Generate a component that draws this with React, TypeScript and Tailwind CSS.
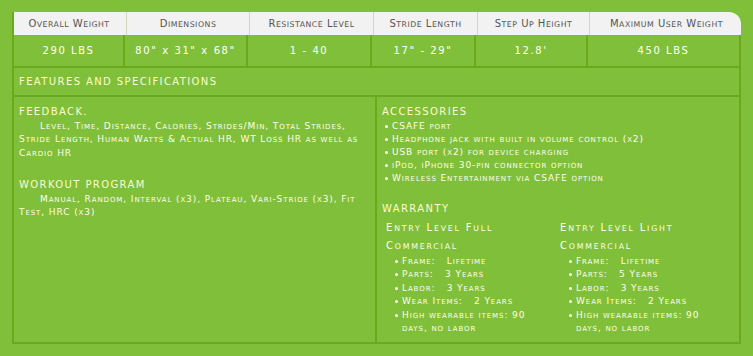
const specs = [
  { label: "Overall Weight", value: "290 LBS" },
  { label: "Dimensions", value: '80" x 31" x 68"' },
  { label: "Resistance Level", value: "1 - 40" },
  { label: "Stride Length", value: '17" - 29"' },
  { label: "Step Up Height", value: "12.8'" },
  { label: "Maximum User Weight", value: "450 LBS" },
]

const accessories = [
  "CSAFE port",
  "Headphone jack with built in volume control (x2)",
  "USB port (x2) for device charging",
  "iPod, iPhone 30-pin connector option",
  "Wireless Entertainment via CSAFE option",
]

const warranties = [
  {
    title: "Entry Level Full Commercial",
    items: ["Frame:   Lifetime", "Parts:   3 Years", "Labor:   3 Years", "Wear Items:   2 Years", "High wearable items: 90 days, no labor"],
  },
  {
    title: "Entry Level Light Commercial",
    items: ["Frame:   Lifetime", "Parts:   5 Years", "Labor:   3 Years", "Wear Items:   2 Years", "High wearable items: 90 days, no labor"],
  },
]

// copperplate-style small caps: lowercase runs shown as smaller capitals
function Word({ word }: { word: string }) {
  const parts = word.split(/([a-z]+)/).filter(Boolean)
  return (
    <span>
      {parts.map((p, i) =>
        /^[a-z]+$/.test(p) ? (
          <span key={i} className="text-[0.78em]">
            {p.toUpperCase()}
          </span>
        ) : (
          <span key={i}>{p}</span>
        ),
      )}
    </span>
  )
}

function SmallCaps({ text }: { text: string }) {
  const words = text.split(/(\s+)/).filter(Boolean)
  return <>{words.map((w, i) => (/^\s+$/.test(w) ? w : <Word key={i} word={w} />))}</>
}

function Bullet({ children }: { children: string }) {
  return (
    <li className="flex gap-[4px]">
      <span className="mt-[5px] h-[3px] w-[3px] shrink-0 rounded-full bg-[#fffde8]" />
      <span className="whitespace-pre-wrap">
        <SmallCaps text={children} />
      </span>
    </li>
  )
}

function Heading({ children, className = "" }: { children: string; className?: string }) {
  return <p className={`text-[10px] leading-[15px] tracking-[1.4px] text-[#fdfbcf] ${className}`}>{children}</p>
}

export default function App() {
  return (
    <div className="min-h-screen bg-[#80bf3a] pl-3 pt-3 font-['DejaVu_Sans',sans-serif] text-[#fffde8]">
      <div className="w-[729px]">
        <div className="grid grid-cols-[113px_123px_124px_104px_112px_153px] overflow-hidden rounded-tr-[12px] border-l-2 border-[#6aa81e]">
          {specs.map((s, i) => (
            <div
              key={s.label}
              className={`flex h-[23px] items-center justify-center bg-[#f2f2f2] text-[10px] tracking-[0.5px] text-[#555] ${i < 5 ? "border-r border-[#c9dcb4]" : ""} ${i === 0 ? "-ml-[2px]" : ""}`}
            >
              <span>
                <SmallCaps text={s.label} />
              </span>
            </div>
          ))}
        </div>
        <div className="border-l-2 border-r-2 border-[#6aa81e]">
          <div className="grid grid-cols-[111px_123px_124px_104px_112px_151px] border-b-2 border-[#6aa81e]">
            {specs.map((s, i) => (
              <div
                key={s.label}
                className={`flex h-[31px] items-center justify-center text-[10px] tracking-[1.6px] text-white ${i < 5 ? "border-r-2 border-[#6aa81e]" : ""}`}
              >
                {s.value}
              </div>
            ))}
          </div>
          <div className="flex h-[29px] items-center border-b-2 border-[#6aa81e] pl-[5px]">
            <Heading>FEATURES AND SPECIFICATIONS</Heading>
          </div>
          <div className="grid h-[247px] grid-cols-[363px_1fr] border-b-2 border-[#6aa81e]">
            <div className="border-r-2 border-[#6aa81e] pl-[5px] pr-[8px] pt-[7px] text-[9px] leading-[13.3px] tracking-[0.9px]">
              <Heading>FEEDBACK.</Heading>
              <p className="mt-[1px] indent-[21px]">
                <SmallCaps text="Level, Time, Distance, Calories, Strides/Min, Total Strides, Stride Length, Human Watts & Actual HR, WT Loss HR as well as Cardio HR" />
              </p>
              <Heading className="mt-[17px]">WORKOUT PROGRAM</Heading>
              <p className="mt-[1px] indent-[21px]">
                <SmallCaps text="Manual, Random, Interval (x3), Plateau, Vari-Stride (x3), Fit Test, HRC (x3)" />
              </p>
            </div>
            <div className="pl-[5px] pt-[7px] text-[9px] leading-[13px] tracking-[0.9px]">
              <Heading>ACCESSORIES</Heading>
              <ul className="mt-[1px] pl-[3px]">
                {accessories.map((a) => (
                  <Bullet key={a}>{a}</Bullet>
                ))}
              </ul>
              <Heading className="mt-[16px]">WARRANTY</Heading>
              <div className="mt-[3px] grid grid-cols-[174px_1fr] pl-[4px]">
                {warranties.map((w) => (
                  <div key={w.title}>
                    <p className="w-[140px] text-[10px] leading-[17px] tracking-[1.8px]">
                      <SmallCaps text={w.title} />
                    </p>
                    <ul className="w-[150px] pl-[9px] leading-[13.4px]">
                      {w.items.map((it) => (
                        <Bullet key={it}>{it}</Bullet>
                      ))}
                    </ul>
                  </div>
                ))}
              </div>
            </div>
          </div>
        </div>
      </div>
    </div>
  )
}
